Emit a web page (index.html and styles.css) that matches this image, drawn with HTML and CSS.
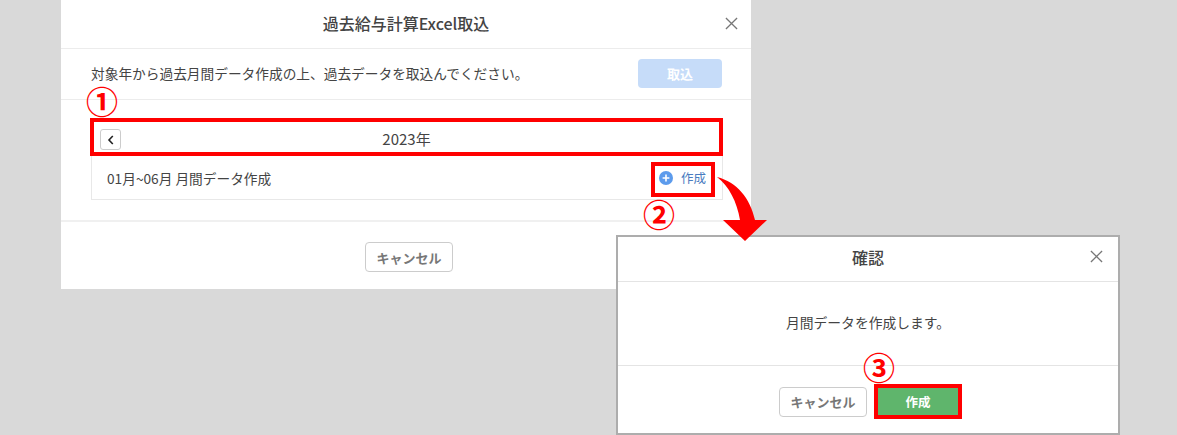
FILE: index.html
```html
<!doctype html>
<html lang="ja">
  <head>
    <meta charset="UTF-8" />
    <title>過去給与計算Excel取込</title>
    <link rel="stylesheet" href="styles.css">
  </head>
  <body>
    <section class="dialog dialog-import">
      <header class="dialog-head">
        <h1>過去給与計算Excel取込</h1>
        <svg class="close" viewBox="0 0 14 14"><path d="M1 1l12 12M13 1L1 13" /></svg>
      </header>
      <div class="import-row">
        <p>対象年から過去月間データ作成の上、過去データを取込んでください。</p>
        <button class="btn-import">取込</button>
      </div>
      <div class="import-body">
        <div class="year-bar">
          <button class="btn-prev">
            <svg viewBox="0 0 8 10"><path d="M5.8 1L2 5l3.8 4" /></svg>
          </button>
          <span>2023年</span>
        </div>
        <div class="month-row">
          <span>01月~06月 月間データ作成</span>
          <a class="create-link">
            <svg viewBox="0 0 14 14"><circle cx="7" cy="7" r="7" /><path d="M7 3.6v6.8M3.6 7h6.8" /></svg>
            作成
          </a>
        </div>
      </div>
      <footer class="dialog-foot">
        <button class="btn-cancel">キャンセル</button>
      </footer>
    </section>

    <section class="dialog dialog-confirm">
      <header class="dialog-head">
        <h1>確認</h1>
        <svg class="close" viewBox="0 0 14 14"><path d="M1 1l12 12M13 1L1 13" /></svg>
      </header>
      <div class="confirm-body">月間データを作成します。</div>
      <footer class="dialog-foot">
        <button class="btn-cancel">キャンセル</button>
        <button class="btn-create">作成</button>
      </footer>
    </section>

    <!-- annotations -->
    <div class="mark mark-1">①</div>
    <div class="mark mark-2">②</div>
    <div class="mark mark-3">③</div>
    <div class="hilite hilite-create"></div>
    <svg class="arrow" viewBox="0 0 50 66">
      <path d="M0 1C20 6 33 22 38 44L50 44L28 65L6 44L23 44C20 26 12 10 0 1Z" />
    </svg>
  </body>
</html>
```

FILE: styles.css
```css
* {
  box-sizing: border-box;
}

body {
  margin: 0;
  width: 1177px;
  height: 435px;
  position: relative;
  overflow: hidden;
  background: #d9d9d9;
  font-family: "Noto Sans CJK JP", "Noto Sans", sans-serif;
  color: #444;
}

button {
  font-family: inherit;
  padding: 0;
}

.dialog {
  position: absolute;
  background: #fff;
}

.dialog-import {
  left: 61px;
  top: 0;
  width: 690px;
  height: 289px;
}

.dialog-confirm {
  left: 616px;
  top: 235px;
  width: 504px;
  height: 200px;
  border: 2px solid #adadad;
}

.dialog-head {
  display: flex;
  align-items: center;
  justify-content: center;
  position: relative;
  border-bottom: 1px solid #ececec;
}

.dialog-import .dialog-head {
  height: 49px;
  padding-bottom: 2px;
}

.dialog-confirm .dialog-head {
  height: 45px;
  padding-bottom: 4px;
  border-bottom-color: #e4e4e4;
}

.dialog-head h1 {
  margin: 0;
  font-size: 16px;
  font-weight: 500;
  color: #444;
}

.close {
  position: absolute;
  right: 13px;
  top: 50%;
  width: 13px;
  height: 13px;
  margin-top: -7px;
  fill: none;
  stroke: #777;
  stroke-width: 1.4;
}

.dialog-confirm .close {
  right: 15px;
  margin-top: -9px;
}

.import-row {
  height: 51px;
  padding: 0 29px 2px 30px;
  display: flex;
  align-items: center;
  justify-content: space-between;
  border-bottom: 1px solid #ececec;
}

.import-row p {
  margin: 0;
  font-size: 13.7px;
}

.btn-import {
  width: 84px;
  height: 29px;
  border: 0;
  border-radius: 4px;
  background: #c6dcf9;
  color: #fff;
  font-size: 13px;
  font-weight: 700;
}

.import-body {
  height: 122px;
  padding: 18px 28px 0 29px;
  border-bottom: 2px solid #f0f0f0;
}

.year-bar {
  height: 38px;
  position: relative;
  display: flex;
  align-items: center;
  justify-content: center;
  border: 4px solid #f00;
  font-size: 15px;
  padding-top: 2px;
}

.btn-prev {
  position: absolute;
  left: 6px;
  top: 7px;
  width: 21px;
  height: 21px;
  display: flex;
  align-items: center;
  justify-content: center;
  background: #fff;
  border: 1px solid #ccc;
  border-radius: 3px;
}

.btn-prev svg {
  width: 8px;
  height: 10px;
  fill: none;
  stroke: #222;
  stroke-width: 1.6;
}

.month-row {
  height: 44px;
  margin-left: 1px;
  padding: 0 16px 0 15px;
  display: flex;
  align-items: center;
  justify-content: space-between;
  border: 1px solid #e8e8e8;
  border-top: 0;
  font-size: 13.7px;
}

.create-link {
  display: flex;
  align-items: center;
  gap: 8px;
  color: #4a7cc0;
  font-size: 12.5px;
}

.create-link svg {
  width: 14px;
  height: 14px;
}

.create-link circle {
  fill: #5c9bec;
}

.create-link path {
  stroke: #fff;
  stroke-width: 1.6;
}

.dialog-foot {
  display: flex;
  justify-content: center;
  align-items: center;
  gap: 7px;
}

.dialog-import .dialog-foot {
  padding: 20px 0 0 6px;
}

.dialog-confirm .dialog-foot {
  padding: 18px 0 0 5px;
  border-top: 1px solid #e4e4e4;
}

.btn-cancel {
  width: 88px;
  height: 30px;
  background: #fff;
  border: 1px solid #ccc;
  border-radius: 4px;
  color: #777;
  font-size: 13px;
  font-weight: 700;
}

.btn-create {
  width: 88px;
  height: 35px;
  background: #5fb56c;
  border: 4px solid #f00;
  color: #fff;
  font-size: 12.5px;
  font-weight: 700;
}

.confirm-body {
  height: 83px;
  padding-bottom: 3px;
  display: flex;
  align-items: center;
  justify-content: center;
  font-size: 13.8px;
}

.mark {
  position: absolute;
  width: 34px;
  text-align: center;
  color: #f00;
  font-size: 32px;
  font-weight: 700;
  line-height: 30px;
}

.mark-1 {
  left: 85px;
  top: 85px;
}

.mark-2 {
  left: 642px;
  top: 198px;
}

.mark-3 {
  left: 862px;
  top: 351px;
}

.hilite {
  position: absolute;
  border: 4px solid #f00;
}

.hilite-create {
  left: 651px;
  top: 162px;
  width: 64px;
  height: 35px;
}

.arrow {
  position: absolute;
  left: 717px;
  top: 176px;
  width: 50px;
  height: 66px;
  fill: #f00;
}
```
